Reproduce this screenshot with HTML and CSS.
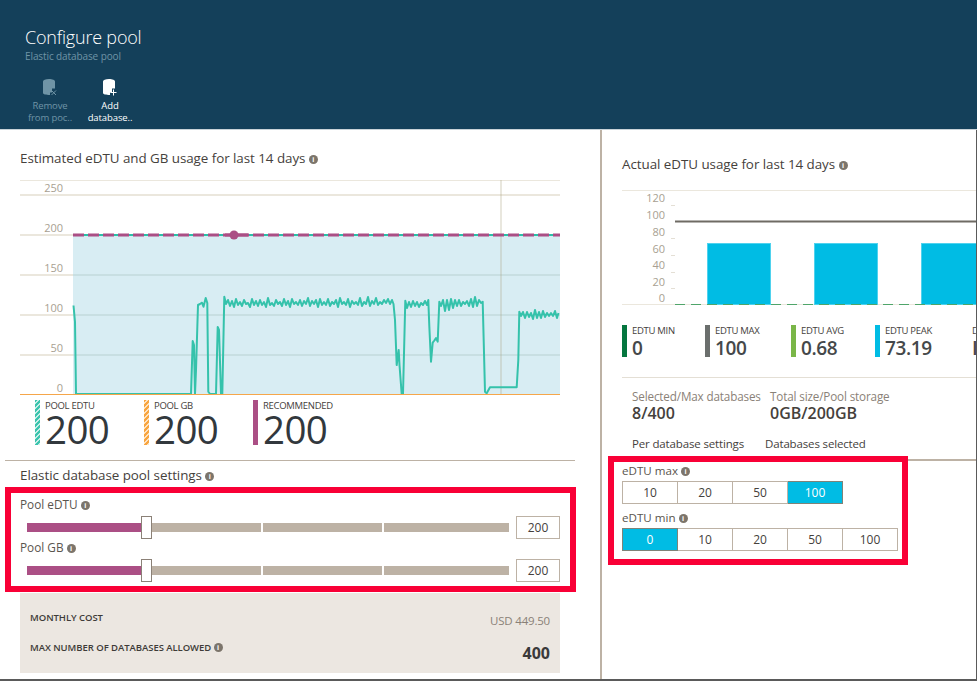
FILE: index.html
```html
<!DOCTYPE html>
<html lang="en">
<head>
<meta charset="utf-8">
<title>Configure pool</title>
<link rel="stylesheet" href="styles.css">
</head>
<body>
<div class="blade">
  <header class="head">
    <h1 class="head-title">Configure pool</h1>
    <p class="head-sub">Elastic database pool</p>
    <div class="cmds">
      <div class="cmd cmd-off">
        <svg class="cmd-icon" viewBox="0 0 16 18" width="16" height="18">
          <path fill="#6f94a6" d="M1 2.5C1 1 3.5 0 7 0s6 1 6 2.5V9.5H10V13.5H8V16C4 16 1 15.2 1 14Z"/>
          <path fill="none" stroke="#6f94a6" stroke-width="1" d="M9.5 11.5l4.5 4.5M14 11.5l-4.5 4.5"/>
        </svg>
        <span>Remove</span><span>from poc..</span>
      </div>
      <div class="cmd">
        <svg class="cmd-icon" viewBox="0 0 16 18" width="16" height="18">
          <path fill="#fff" d="M1 2.5C1 1 3.5 0 7 0s6 1 6 2.5V9.5H10V13.5H8V16C4 16 1 15.2 1 14Z"/>
          <path fill="none" stroke="#fff" stroke-width="1" d="M11.5 10.5v6M8.5 13.5h6"/>
        </svg>
        <span>Add</span><span>database..</span>
      </div>
    </div>
  </header>
  <div class="panes">
    <section class="pane-left">
      <h2 class="title title-est">Estimated eDTU and GB usage for last 14 days <i class="info">i</i></h2>
      <svg class="chart-est" viewBox="20 180 540 216" width="540" height="216">
        <line class="grid-thin" x1="20" x2="560" y1="180.5" y2="180.5"/>
        <rect class="area" x="73" y="235" width="487" height="159"/>
        <line class="grid" x1="20" x2="560" y1="195" y2="195"/>
        <line class="grid" x1="20" x2="73" y1="235" y2="235"/>
        <line class="grid" x1="20" x2="73" y1="275" y2="275"/>
        <line class="grid" x1="20" x2="73" y1="315" y2="315"/>
        <line class="grid" x1="20" x2="73" y1="355" y2="355"/>
        <line class="grid-in" x1="73" x2="560" y1="275" y2="275"/>
        <line class="grid-in" x1="73" x2="560" y1="315" y2="315"/>
        <line class="grid-in" x1="73" x2="560" y1="355" y2="355"/>
        <text class="axis" x="63" y="192">250</text>
        <text class="axis" x="63" y="232">200</text>
        <text class="axis" x="63" y="272">150</text>
        <text class="axis" x="63" y="312">100</text>
        <text class="axis" x="63" y="352">50</text>
        <text class="axis" x="63" y="392">0</text>
        <line class="cursor" x1="501" x2="501" y1="180" y2="394"/>
        <polyline class="usage" points="73.5,305.5 75,322 76,394 191,394 192.7,341 194,345 195,394 196,370 198,305 200,304 202,302.7 203.5,306.7 205.7,298 207.3,303 208.3,391.7 210,394 216,394 217.7,327 219,330 221,394 222.3,394 224.3,296.7 226,304 228,300 230,306 232,301 234,307 236,299 238,305 240,302 242,306 244,300 246,304 248,303 250,307 252,299 254,305 256,301 258,306 260,300 262,305 264,302 266,307 268,298 270,305 272,303 274,306 276,300 278,304 280,302 282,306 284,299 286,305 288,301 290,307 292,299 294,304 296,302 298,305 300,300 302,306 304,301 306,304 308,298 310,306 312,301 314,304 316,300 318,307 320,299 322,305 324,302 326,305 328,299 330,306 332,302 334,304 336,300 338,307 340,298 342,304 344,302 346,305 348,299 350,307 352,301 354,304 356,302 358,305 360,298 362,306 364,302 366,304 368,297 370,306 372,301 374,304 376,298 378,305 380,302 382,304 384,300 386,303 388,299 390,304 392,300 393.5,304 395,320 396.7,365 398.7,350 399.5,365 401.7,394 403,394 405.3,300.7 407,308 409,302 411,307 413,301 415,306 417,302 419,307 421,303 423,305 425,301 427,305 428.3,300 429.3,326 431,361.7 432.7,342.7 434,341 436,338 437.7,341.7 439.3,301.7 441,306 443,300 445,311 447,300 449,310 451,299 453,308 455,300 457,306 459,300 461,306 463,302 465,304 467,301 469,306 471,299 473,307 475,297 477,306 479,300 481,303 482.7,301.7 485,391.7 486.7,393.3 490,387.3 516.7,387.3 518.3,360 519.3,311.7 521,316 523,312 525,318 527,312 529,317 531,313 533,319 535,310 537,318 539,312 541,318 543,311 545,317 547,313 549,316 551,313 553,316 555,311 557,318 558.5,313"/>
        <line class="base" x1="20" x2="560" y1="394.5" y2="394.5"/>
        <line class="rec-under" x1="73" x2="560" y1="235" y2="235"/>
        <line class="rec-dash" x1="73" x2="560" y1="235" y2="235"/>
        <line class="rec-solid" x1="225" x2="248" y1="235" y2="235"/>
        <circle class="rec-dot" cx="234" cy="235" r="4.5"/>
      </svg>
      <div class="legend">
        <div class="legend-item hatch-teal"><span class="legend-label">POOL EDTU</span><span class="legend-num">200</span></div>
        <div class="legend-item hatch-orange"><span class="legend-label">POOL GB</span><span class="legend-num">200</span></div>
        <div class="legend-item solid-purple"><span class="legend-label">RECOMMENDED</span><span class="legend-num">200</span></div>
      </div>
      <h2 class="title title-settings">Elastic database pool settings <i class="info">i</i></h2>
      <div class="mark mark-left">
        <div class="field-label">Pool eDTU <i class="info">i</i></div>
        <div class="slider-row">
          <div class="slider">
            <span class="fill"></span><span class="thumb"></span><span class="seg seg-a"></span><span class="seg seg-b"></span><span class="seg seg-c"></span>
          </div>
          <div class="value">200</div>
        </div>
        <div class="field-label">Pool GB <i class="info">i</i></div>
        <div class="slider-row">
          <div class="slider">
            <span class="fill"></span><span class="thumb"></span><span class="seg seg-a"></span><span class="seg seg-b"></span><span class="seg seg-c"></span>
          </div>
          <div class="value">200</div>
        </div>
      </div>
      <div class="cost">
        <div class="cost-row cost-row-a"><span class="cost-label">MONTHLY COST</span><span class="cost-usd">USD 449.50</span></div>
        <div class="cost-row"><span class="cost-label">MAX NUMBER OF DATABASES ALLOWED <i class="info">i</i></span><span class="cost-max">400</span></div>
      </div>
    </section>
    <section class="pane-right">
      <h2 class="title title-act">Actual eDTU usage for last 14 days <i class="info">i</i></h2>
      <svg class="chart-act" viewBox="622 190 354 116" width="354" height="116">
        <line class="grid-thin" x1="622" x2="976" y1="190.5" y2="190.5"/>
        <line class="grid-thin" x1="622" x2="976" y1="304.5" y2="304.5"/>
        <text class="axis" x="665" y="202">120</text>
        <text class="axis" x="665" y="219">100</text>
        <text class="axis" x="665" y="236">80</text>
        <text class="axis" x="665" y="253">60</text>
        <text class="axis" x="665" y="269">40</text>
        <text class="axis" x="665" y="286">20</text>
        <text class="axis" x="665" y="302">0</text>
        <path class="ticks" d="M671 205.5h4M671 238.5h4M671 255.5h4M671 272.5h4M671 288.5h4"/>
        <rect class="bar" x="707.5" y="243.5" width="63" height="61"/>
        <rect class="bar" x="814.5" y="243.5" width="63" height="61"/>
        <rect class="bar" x="921.5" y="243.5" width="55" height="61"/>
        <line class="cap" x1="675" x2="976" y1="221.5" y2="221.5"/>
        <line class="min-dash" x1="675" x2="976" y1="304.5" y2="304.5"/>
      </svg>
      <div class="stats">
        <div class="stat stat-min"><span class="stat-label">EDTU MIN</span><span class="stat-num">0</span></div>
        <div class="stat stat-max"><span class="stat-label">EDTU MAX</span><span class="stat-num">100</span></div>
        <div class="stat stat-avg"><span class="stat-label">EDTU AVG</span><span class="stat-num">0.68</span></div>
        <div class="stat stat-peak"><span class="stat-label">EDTU PEAK</span><span class="stat-num">73.19</span></div>
        <div class="stat stat-more"><span class="stat-label">D</span><span class="stat-num">I</span></div>
      </div>
      <div class="dbs">
        <div class="db-col db-a"><span class="db-label">Selected/Max databases</span><span class="db-num">8/400</span></div>
        <div class="db-col"><span class="db-label">Total size/Pool storage</span><span class="db-num">0GB/200GB</span></div>
      </div>
      <div class="perdb">
        <span class="perdb-a">Per database settings</span>
        <span>Databases selected</span>
      </div>
      <div class="mark mark-right">
        <div class="seg-label">eDTU max <i class="info">i</i></div>
        <div class="pick pick-4">
          <span class="opt">10</span><span class="opt">20</span><span class="opt">50</span><span class="opt opt-on">100</span>
        </div>
        <div class="seg-label">eDTU min <i class="info">i</i></div>
        <div class="pick pick-5">
          <span class="opt opt-on">0</span><span class="opt">10</span><span class="opt">20</span><span class="opt">50</span><span class="opt">100</span>
        </div>
      </div>
    </section>
  </div>
</div>
</body>
</html>
```
FILE: styles.css
```css
* { box-sizing: border-box; }
html, body { margin: 0; padding: 0; }
body {
  width: 977px;
  height: 681px;
  overflow: hidden;
  background: #fff;
  color: #3e3b38;
  font-family: "Open Sans", "Noto Sans", sans-serif;
  font-size: 12px;
}
.blade {
  width: 977px;
  height: 681px;
  display: flex;
  flex-direction: column;
  border-bottom: 2px solid #5a5a5a;
}
.head {
  height: 130px;
  flex: none;
  background: #14405a;
  border-bottom: 1px solid #c9d3d8;
  padding: 26px 0 0 25px;
}
.head-title {
  margin: 0;
  font-size: 18px;
  line-height: 22px;
  font-weight: 300;
  color: #fff;
  letter-spacing: -0.2px;
}
.head-sub {
  margin: 2px 0 0;
  font-size: 10px;
  line-height: 13px;
  color: #6f94a6;
  letter-spacing: -0.1px;
}
.cmds {
  display: flex;
  margin: 16px 0 0 -5px;
}
.cmd {
  width: 60px;
  display: flex;
  flex-direction: column;
  align-items: center;
  font-size: 9.5px;
  line-height: 12px;
  color: #fff;
  letter-spacing: -0.1px;
  white-space: nowrap;
}
.cmd-off { color: #6f94a6; }
.cmd-icon { display: block; margin-bottom: 3px; }

.panes {
  flex: 1;
  display: flex;
  min-height: 0;
}
.pane-left {
  width: 602px;
  flex: none;
  border-right: 2px solid #bdb2a5;
}
.pane-right {
  flex: 1;
  min-width: 0;
  overflow: hidden;
  border-right: 1px solid #5a5a5a;
}
.title {
  margin: 0;
  font-size: 13.4px;
  line-height: 20px;
  font-weight: 400;
  color: #45413c;
  letter-spacing: -0.05px;
}
.title-est { padding: 18px 0 0 20px; height: 39px; }
.title-settings {
  width: 570px;
  height: 27px;
  margin: 15px 0 0 5px;
  padding: 4px 0 0 15px;
  border-top: 1px solid #bdb2a5;
}
.title-act { padding: 24px 0 0 20px; height: 44px; }
.info {
  display: inline-block;
  width: 9px;
  height: 9px;
  border-radius: 50%;
  background: #7c756b;
  color: #fff;
  font-family: "Liberation Sans", sans-serif;
  font-size: 7.5px;
  line-height: 9px;
  font-weight: 700;
  font-style: normal;
  text-align: center;
  vertical-align: 1px;
  letter-spacing: 0;
}

.chart-est { display: block; margin: 11px 0 0 20px; }
.chart-act { display: block; margin: 16px 0 0 20px; }
.grid { stroke: #ebe7dd; stroke-width: 2; }
.grid-in { stroke: #c8dfe2; stroke-width: 2; }
.grid-thin { stroke: #ebe7dd; stroke-width: 1; }
.area { fill: #d8edf3; }
.axis {
  fill: #a89f92;
  font-size: 11px;
  text-anchor: end;
}
.cursor { stroke: rgba(170, 160, 130, 0.35); stroke-width: 1.5; }
.usage {
  fill: none;
  stroke: #35c2ab;
  stroke-width: 2;
  stroke-linejoin: round;
}
.base { stroke: #f5a64a; stroke-width: 1; }
.rec-under { stroke: #2cc0a8; stroke-width: 2; }
.rec-dash { stroke: #ab4f85; stroke-width: 3; stroke-dasharray: 11 4; }
.rec-solid { stroke: #ab4f85; stroke-width: 3; }
.rec-dot { fill: #ab4f85; }
.ticks { stroke: #e4dfd5; stroke-width: 1; fill: none; }
.bar { fill: #00bce4; stroke: #4fd2ee; stroke-width: 1; }
.cap { stroke: #6f6b64; stroke-width: 2; }
.min-dash { stroke: #4fa56a; stroke-width: 1; stroke-dasharray: 10 6; }

.legend {
  display: grid;
  grid-template-columns: 109px 109px 109px;
  margin: 4px 0 0 35px;
  height: 45px;
}
.legend-item {
  position: relative;
  height: 45px;
  padding-left: 10px;
  display: flex;
  flex-direction: column;
}
.legend-item::before {
  content: "";
  position: absolute;
  left: 0;
  top: 0;
  bottom: 0;
  width: 5px;
}
.hatch-teal::before {
  background: repeating-linear-gradient(135deg, #3cc4ae 0 2px, #c9eee8 2px 3.5px);
}
.hatch-orange::before {
  background: repeating-linear-gradient(135deg, #f8a540 0 2px, #fde3c2 2px 3.5px);
}
.solid-purple::before { background: #ab4f85; }
.legend-label {
  font-size: 9.5px;
  line-height: 12px;
  color: #45413c;
  letter-spacing: -0.3px;
  white-space: nowrap;
}
.legend-num {
  font-size: 38.5px;
  line-height: 34px;
  color: #32383d;
  letter-spacing: -0.6px;
}

.mark {
  border: 6px solid #f90036;
  background: #fff;
}
.mark-left {
  width: 571px;
  height: 105px;
  margin-left: 5px;
  padding: 3px 0 0 9px;
}
.field-label {
  font-size: 11.8px;
  line-height: 16px;
  height: 20px;
  color: #5a554e;
}
.slider-row {
  display: flex;
  align-items: center;
  height: 23px;
  padding-left: 7px;
}
.slider {
  width: 482px;
  display: flex;
  align-items: center;
}
.fill { width: 114px; height: 9px; background: #ab4f85; }
.thumb {
  width: 11px;
  height: 23px;
  background: #fff;
  border: 1px solid #8b8177;
}
.seg { height: 9px; background: #bdb2a5; }
.seg-a { width: 109px; margin-right: 2px; }
.seg-b { width: 119px; margin-right: 2px; }
.seg-c { width: 125px; }
.value {
  width: 44px;
  height: 23px;
  margin-left: 7px;
  border: 1px solid #bdb2a5;
  text-align: center;
  font-size: 12px;
  line-height: 22px;
  color: #45413c;
}
.cost {
  width: 540px;
  height: 80px;
  margin: 1px 0 0 20px;
  background: #ece7e1;
  padding: 18px 10px 0;
}
.cost-row {
  display: flex;
  justify-content: space-between;
  align-items: flex-start;
}
.cost-row-a { height: 30px; }
.cost-label {
  font-size: 9.5px;
  line-height: 14px;
  font-weight: 600;
  color: #3e3b38;
  letter-spacing: -0.05px;
}
.cost-usd {
  font-size: 11.5px;
  line-height: 16px;
  margin-top: 2px;
  color: #8a8177;
  letter-spacing: -0.2px;
}
.cost-max {
  font-size: 16px;
  line-height: 20px;
  margin-top: 2px;
  font-weight: 700;
  color: #3a3a3a;
}

.stats {
  display: grid;
  grid-template-columns: 83px 86px 84px 97px 5px;
  margin: 19px 0 0 20px;
  height: 32px;
}
.stat {
  height: 32px;
  padding-left: 5px;
  border-left: 5px solid transparent;
  display: flex;
  flex-direction: column;
  white-space: nowrap;
}
.stat-min { border-left-color: #05763f; }
.stat-max { border-left-color: #6b6f6d; }
.stat-avg { border-left-color: #7ab648; }
.stat-peak { border-left-color: #00bce4; }
.stat-more { border-left: 0; padding-left: 0; }
.stat-label {
  font-size: 9.5px;
  line-height: 12px;
  color: #45413c;
  letter-spacing: -0.3px;
}
.stat-num {
  font-size: 19px;
  line-height: 22px;
  font-weight: 600;
  color: #45484a;
  letter-spacing: -0.4px;
}
.dbs {
  display: flex;
  margin: 20px 0 0 20px;
  padding: 10px 0 0 10px;
  border-top: 1px solid #e4dfd5;
}
.db-col { display: flex; flex-direction: column; }
.db-a { width: 138px; }
.db-label {
  font-size: 11.7px;
  line-height: 16px;
  color: #8a8177;
  white-space: nowrap;
  letter-spacing: -0.15px;
}
.db-num {
  font-size: 16px;
  line-height: 18px;
  font-weight: 600;
  color: #45413c;
}
.perdb {
  display: flex;
  height: 25px;
  margin: 14px 0 0 10px;
  padding: 0 0 0 20px;
  border-bottom: 2px solid #bdb2a5;
  font-size: 11.5px;
  line-height: 16px;
  color: #45413c;
  letter-spacing: -0.15px;
}
.perdb-a { width: 133px; }
.mark-right {
  width: 300px;
  height: 109px;
  margin: -5px 0 0 6px;
  padding: 1px 0 0 8px;
}
.seg-label {
  font-size: 11.6px;
  line-height: 16px;
  height: 18px;
  color: #5a554e;
}
.pick { display: flex; height: 23px; }
.pick-4 { margin-bottom: 6px; }
.opt {
  width: 55px;
  height: 23px;
  border: 1px solid #bdb2a5;
  border-left-width: 0;
  text-align: center;
  font-size: 12px;
  line-height: 22px;
  color: #45413c;
}
.opt:first-child { border-left-width: 1px; width: 56px; }
.opt-on {
  background: #00bce4;
  border-color: #7f8378;
  color: #fff;
}
```
